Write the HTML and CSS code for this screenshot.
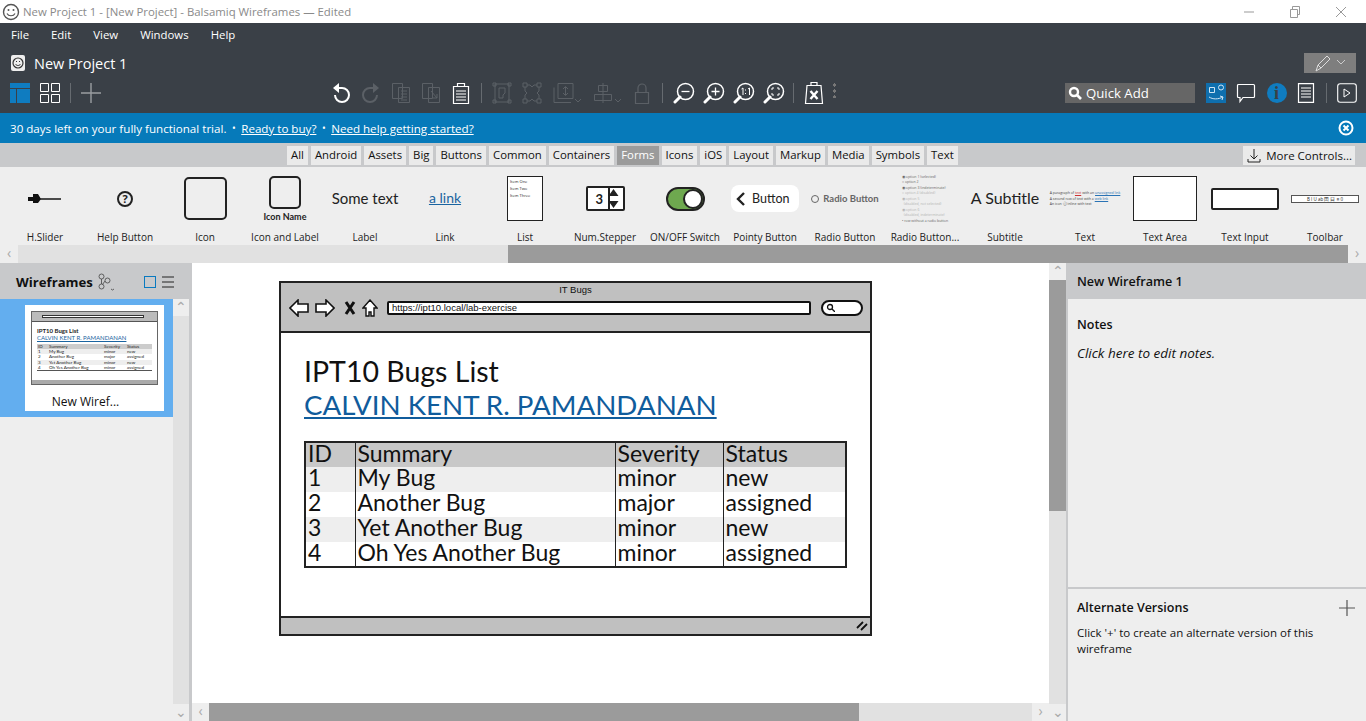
FILE: index.html
```html
<!DOCTYPE html>
<html lang="en">

<head>
    <meta charset="UTF-8">
    <meta name="viewport" content="width=device-width, initial-scale=1.0">
    <title>New Project 1 - Balsamiq Wireframes</title>
    <link rel="stylesheet" href="styles.css">
</head>

<body>
    <svg class="defs" width="0" height="0">
        <symbol id="lens" viewBox="0 0 22 22">
            <circle cx="12.5" cy="9.5" r="8" fill="none" stroke="currentColor" stroke-width="1.5" />
            <path d="M7 15l-5 5" fill="none" stroke="currentColor" stroke-width="3" stroke-linecap="round" />
        </symbol>
    </svg>

    <header class="titlebar">
        <svg class="title-logo" width="18" height="18" viewBox="0 0 18 18">
            <circle cx="9" cy="9" r="7.5" fill="#fff" stroke="#555" stroke-width="1.4" />
            <circle cx="6.5" cy="7" r="1" fill="#555" />
            <circle cx="11.5" cy="7" r="1" fill="#555" />
            <path d="M5 10.5c1.5 3 6.500 3 8 0" fill="none" stroke="#555" stroke-width="1.2" />
        </svg>
        <span class="title-text">New Project 1 - [New Project] - Balsamiq Wireframes — Edited</span>
        <div class="window-btns">
            <svg width="12" height="12" viewBox="0 0 12 12"><path d="M1 6h10" stroke="#999" stroke-width="1" /></svg>
            <svg width="12" height="12" viewBox="0 0 12 12"><path d="M1.500 3.500h7v8h-7zM3.500 3.500v-3h7v8h-2" fill="none" stroke="#999" /></svg>
            <svg width="12" height="12" viewBox="0 0 12 12"><path d="M1 1l10 10M11 1L1 11" stroke="#999" /></svg>
        </div>
    </header>

    <nav class="menubar">
        <span>File</span><span>Edit</span><span>View</span><span>Windows</span><span>Help</span>
    </nav>

    <div class="projectbar">
        <svg width="16" height="18" viewBox="0 0 16 18">
            <rect x="1" y="1" width="14" height="16" rx="2" fill="#eee" />
            <circle cx="8" cy="9" r="5" fill="none" stroke="#333" stroke-width="1.2" />
            <path d="M5.500 10c1 2 4 2 5 0M6 7.500h1M9 7.500h1" fill="none" stroke="#333" />
        </svg>
        <span class="project-name">New Project 1</span>
        <div class="edit-mode">
            <svg width="32" height="20" viewBox="0 0 32 20">
                <path d="M2 18l2-6L13 3l3 3-9 9zM4 12l3 3" fill="none" stroke="#ddd" />
                <path d="M23 7l4 4 4-4" fill="none" stroke="#ccc" />
            </svg>
        </div>
    </div>

    <div class="toolbar">
        <div class="tool-group group-left">
            <svg width="20" height="20" viewBox="0 0 20 20"><path fill="#0f7cc0" d="M0 0h20v5H0zM0 6h6v14H0zM7 6h13v14H7z" /></svg>
            <svg class="gap-10" width="20" height="20" viewBox="0 0 20 20"><path fill="none" stroke="#fff" d="M.5.500h8v8h-8zM11.500.500h8v8h-8zM.5 11.500h8v8h-8zM11.500 11.500h8v8h-8z" /></svg>
            <span class="tool-sep"></span>
            <svg width="20" height="20" viewBox="0 0 20 20"><path d="M10 0v20M0 10h20" stroke="#9a9da1" stroke-width="1.400" /></svg>
        </div>
        <div class="tool-group group-center">
            <svg width="20" height="22" viewBox="0 0 20 22"><path d="M6 6h5a7 7 0 1 1-7 7" fill="none" stroke="#fff" stroke-width="2" /><path d="M8 1v10L2 6z" fill="#fff" /></svg>
            <svg class="off" width="20" height="22" viewBox="0 0 20 22"><path d="M14 6H9a7 7 0 1 0 7 7" fill="none" stroke="currentColor" stroke-width="2" /><path d="M12 1v10l6-5z" fill="currentColor" /></svg>
            <svg class="off" width="20" height="22" viewBox="0 0 20 22"><path d="M1.500 1.500h10v15h-10zM7.500 5.500h11v15h-11zM10 9h6M10 12h6M10 15h6M10 18h6" fill="none" stroke="currentColor" /></svg>
            <svg class="off" width="20" height="22" viewBox="0 0 20 22"><path d="M1.500 1.500h10v15h-10zM7.500 5.500h11v15h-11zM10 9l6 7M16 12v4h-4" fill="none" stroke="currentColor" /></svg>
            <svg width="20" height="22" viewBox="0 0 20 22"><path d="M2.500 4.500h15v17h-15zM6.500 4.500v-3h7v3M5 9h10M5 12h10M5 15h10M5 18h10" fill="none" stroke="#fff" stroke-width="1.200" /></svg>
            <span class="tool-sep"></span>
            <svg class="off" width="20" height="22" viewBox="0 0 20 22"><path d="M3 2h14v18H3zM1 1h3v3H1zM16 1h3v3h-3zM1 18h3v3H1zM16 18h3v3h-3zM7 6h6v5l-2 2v3H7z" fill="none" stroke="currentColor" /></svg>
            <svg class="off" width="20" height="22" viewBox="0 0 20 22"><path d="M1 1h4v4H1zM15 1h4v4h-4zM1 17h4v4H1zM15 17h4v4h-4zM5 3h3l2 2 2-2h3M3 5v4l2 2-2 2v4M17 5v4l-2 2 2 2v4M5 19h3l2-2 2 2h3" fill="none" stroke="currentColor" /></svg>
            <svg class="off wide" width="30" height="22" viewBox="0 0 30 22"><path d="M6 1.500h15v15H6M6 1.500v15M2 5.500v15h17M13.500 5v8M11 7l2.500-2.500L16 7M11 11l2.500 2.500L16 11M23 17l3 3 3-3" fill="none" stroke="currentColor" /></svg>
            <svg class="off wide" width="30" height="22" viewBox="0 0 30 22"><path d="M11 1v20M6.500 3.500h9v6h-9zM2.500 12.500h17v6h-17zM23 17l3 3 3-3" fill="none" stroke="currentColor" /></svg>
            <svg class="off" width="20" height="22" viewBox="0 0 20 22"><path d="M3.500 10.500h13v11h-13zM6 10V6a4 4 0 0 1 8 0v4" fill="none" stroke="currentColor" stroke-width="1.200" /></svg>
            <span class="tool-sep"></span>
            <svg class="zoom-ico" width="22" height="22"><use href="#lens" /><path d="M8.500 9.500h8" stroke="#fff" stroke-width="1.300" /></svg>
            <svg class="zoom-ico" width="22" height="22"><use href="#lens" /><path d="M8.500 9.500h8M12.500 5.500v8" stroke="#fff" stroke-width="1.300" /></svg>
            <svg class="zoom-ico" width="22" height="22"><use href="#lens" /><path d="M8.500 7l1.500-1v7M15 7l1.500-1v7M12.500 7.500v1M12.500 11v1" stroke="#fff" fill="none" /></svg>
            <svg class="zoom-ico" width="22" height="22"><use href="#lens" /><path d="M9 8V6h2M14 6h2v2M16 11v2h-2M11 13H9v-2" stroke="#fff" fill="none" /></svg>
            <span class="tool-sep"></span>
            <svg width="20" height="24" viewBox="0 0 20 24"><path d="M3 4.500h14l1.500 18h-17zM7 4.500v-3h6v3" fill="none" stroke="#fff" stroke-width="1.200" /><path d="M6.500 10l7 8M13.500 10l-7 8" stroke="#fff" stroke-width="2.400" /></svg>
            <span class="tool-dots"></span>
        </div>
        <div class="tool-group group-right">
            <div class="quick-add">
                <svg width="14" height="14" viewBox="0 0 14 14"><circle cx="6" cy="6" r="4" fill="none" stroke="#fff" stroke-width="2.400" /><path d="M9 9l4 4" stroke="#fff" stroke-width="2.600" /></svg>
                <span>Quick Add</span>
            </div>
            <svg width="20" height="20" viewBox="0 0 20 20"><path fill="#0f6fae" d="M0 0h20v20H0z" /><path d="M3.500 4.500h5v5h-5zM15 7a2.500 2.500 0 1 0 0-5 2.500 2.500 0 0 0 0 5zM3 14c4 2.500 9 2.500 14 0M14 13l3 1-1 3" fill="none" stroke="#cfe4f3" /></svg>
            <svg width="20" height="22" viewBox="0 0 20 22"><path d="M2.500 2.500h15a1 1 0 0 1 1 1v11a1 1 0 0 1-1 1H7l-3 4v-4H2.500a1 1 0 0 1-1-1v-11a1 1 0 0 1 1-1z" fill="none" stroke="#fff" stroke-width="1.200" /></svg>
            <div class="info-btn">i</div>
            <svg width="18" height="20" viewBox="0 0 18 20"><path d="M1.500.700h15v18.600h-15zM4 5h10M4 8h10M4 11h10M4 14h10" fill="none" stroke="#fff" stroke-width="1.200" /></svg>
            <span class="tool-sep"></span>
            <svg width="20" height="20" viewBox="0 0 20 20"><rect x=".7" y=".7" width="18.600" height="18.600" rx="2.500" fill="none" stroke="#fff" stroke-width="1.100" /><path d="M7 6l6 4-6 4z" fill="none" stroke="#fff" /></svg>
        </div>
    </div>

    <div class="banner">
        <span>30 days left on your fully functional trial.</span>
        <span class="dot">•</span>
        <a href="#">Ready to buy?</a>
        <span class="dot">•</span>
        <a href="#">Need help getting started?</a>
        <svg class="banner-close" width="16" height="16" viewBox="0 0 16 16">
            <circle cx="8" cy="8" r="6.500" fill="none" stroke="#fff" stroke-width="2" />
            <path d="M5.500 5.500l5 5M10.500 5.500l-5 5" stroke="#fff" stroke-width="2" />
        </svg>
    </div>

    <div class="tabs">
        <span class="tab">All</span>
        <span class="tab">Android</span>
        <span class="tab">Assets</span>
        <span class="tab">Big</span>
        <span class="tab">Buttons</span>
        <span class="tab">Common</span>
        <span class="tab">Containers</span>
        <span class="tab tab-on">Forms</span>
        <span class="tab">Icons</span>
        <span class="tab">iOS</span>
        <span class="tab">Layout</span>
        <span class="tab">Markup</span>
        <span class="tab">Media</span>
        <span class="tab">Symbols</span>
        <span class="tab">Text</span>
        <span class="tab more-controls">
            <svg width="14" height="14" viewBox="0 0 14 14"><path d="M7 0v10M3.500 6.500L7 10l3.500-3.500M1 10v3h12v-3" fill="none" stroke="#222" /></svg>
            More Controls...
        </span>
    </div>

    <div class="library">
        <div class="lib-item">
            <div class="lib-preview"><svg width="34" height="12" viewBox="0 0 34 12"><path d="M0 4h5V1h5l3 5-3 4H5V8H0z" fill="#111" /><path d="M12 6h21" stroke="#222" stroke-width="1.600" /></svg></div>
            <span>H.Slider</span>
        </div>
        <div class="lib-item">
            <div class="lib-preview"><div class="help-btn">?</div></div>
            <span>Help Button</span>
        </div>
        <div class="lib-item">
            <div class="lib-preview"><div class="icon-box"></div></div>
            <span>Icon</span>
        </div>
        <div class="lib-item">
            <div class="lib-preview icon-label"><div class="icon-box small"></div><em>Icon Name</em></div>
            <span>Icon and Label</span>
        </div>
        <div class="lib-item">
            <div class="lib-preview"><b class="some-text">Some text</b></div>
            <span>Label</span>
        </div>
        <div class="lib-item">
            <div class="lib-preview"><a href="#" class="lib-link">a link</a></div>
            <span>Link</span>
        </div>
        <div class="lib-item">
            <div class="lib-preview">
                <div class="list-box"><span>Item One</span><span>Item Two</span><span>Item Three</span></div>
            </div>
            <span>List</span>
        </div>
        <div class="lib-item">
            <div class="lib-preview">
                <div class="stepper"><b>3</b><svg width="13" height="21" viewBox="0 0 13 21"><path d="M6.500 1l5 7h-10zM6.500 20l5-7h-10z" fill="#222" /></svg></div>
            </div>
            <span>Num.Stepper</span>
        </div>
        <div class="lib-item">
            <div class="lib-preview"><div class="switch"><i></i></div></div>
            <span>ON/OFF Switch</span>
        </div>
        <div class="lib-item">
            <div class="lib-preview">
                <div class="pointy"><svg width="10" height="14" viewBox="0 0 10 14"><path d="M8 1L2 7l6 6" fill="none" stroke="#222" stroke-width="2.400" /></svg><b>Button</b></div>
            </div>
            <span>Pointy Button</span>
        </div>
        <div class="lib-item">
            <div class="lib-preview"><div class="radio"><i></i>Radio Button</div></div>
            <span>Radio Button</span>
        </div>
        <div class="lib-item">
            <div class="lib-preview">
                <div class="radio-group">
                    <span>◉ option 1 (selected)</span>
                    <span>○ option 2</span>
                    <span>◉ option 3 (indeterminate)</span>
                    <span class="dim">○ option 4 (disabled)</span>
                    <span class="dim">◉ option 5</span>
                    <span class="dim">&nbsp;&nbsp;(disabled, not selected)</span>
                    <span class="dim">◉ option 6</span>
                    <span class="dim">&nbsp;&nbsp;(disabled, indeterminate)</span>
                    <span>• row without a radio button</span>
                </div>
            </div>
            <span>Radio Button...</span>
        </div>
        <div class="lib-item">
            <div class="lib-preview"><b class="subtitle">A Subtitle</b></div>
            <span>Subtitle</span>
        </div>
        <div class="lib-item">
            <div class="lib-preview">
                <div class="mini-para">
                    <span>A paragraph of <u class="red">text</u> with an <u class="blue">unassigned link</u></span>
                    <span>A second row of text with a <u class="blue">web link</u></span>
                    <span>An icon ⓘ inline with text</span>
                </div>
            </div>
            <span>Text</span>
        </div>
        <div class="lib-item">
            <div class="lib-preview"><div class="text-area"></div></div>
            <span>Text Area</span>
        </div>
        <div class="lib-item">
            <div class="lib-preview"><div class="text-input"></div></div>
            <span>Text Input</span>
        </div>
        <div class="lib-item">
            <div class="lib-preview"><div class="mini-toolbar">B I U ab 田 日 ≡ 0</div></div>
            <span>Toolbar</span>
        </div>
    </div>

    <div class="hscroll lib-scroll">
        <span class="arrow">‹</span>
        <div class="track"><div class="thumb"></div></div>
        <span class="arrow">›</span>
    </div>

    <main class="workspace">
        <aside class="pages">
            <div class="pages-head">
                <b>Wireframes</b>
                <svg class="branch" width="18" height="18" viewBox="0 0 18 18"><path d="M4.500 6a2.500 2.500 0 1 0 0-5 2.500 2.500 0 0 0 0 5zM4.500 16a2.500 2.500 0 1 0 0-5 2.500 2.500 0 0 0 0 5zM10.500 10a2.500 2.500 0 1 0 0-5 2.500 2.500 0 0 0 0 5zM4.500 6v5M8 8l-2.500 3.500M14 16l1.500 1 1.500-1" fill="none" stroke="#444" stroke-width=".8" /></svg>
                <span class="view-square"></span>
                <svg width="12" height="12" viewBox="0 0 12 12"><path d="M0 1h12M0 6h12M0 11h12" stroke="#222" /></svg>
            </div>
            <div class="pages-body">
                <div class="pages-list">
                    <div class="page-on">
                        <div class="page-card">
                            <div class="mini-browser">
                                <div class="mini-top"><div class="mini-url"></div></div>
                                <div class="mini-content">
                                    <div class="mini-h">IPT10 Bugs List</div>
                                    <div class="mini-a">CALVIN KENT R. PAMANDANAN</div>
                                    <table class="mini-table">
                                        <tr class="hd"><td class="m-id">ID</td><td class="m-sum">Summary</td><td class="m-sev">Severity</td><td>Status</td></tr>
                                        <tr class="st"><td>1</td><td>My Bug</td><td>minor</td><td>new</td></tr>
                                        <tr><td>2</td><td>Another Bug</td><td>major</td><td>assigned</td></tr>
                                        <tr class="st"><td>3</td><td>Yet Another Bug</td><td>minor</td><td>new</td></tr>
                                        <tr><td>4</td><td>Oh Yes Another Bug</td><td>minor</td><td>assigned</td></tr>
                                    </table>
                                </div>
                                <div class="mini-bottom"></div>
                            </div>
                            <div class="page-name">New Wiref...</div>
                        </div>
                    </div>
                </div>
                <div class="vscroll list-scroll">
                    <span class="arrow">⌃</span>
                    <div class="track"></div>
                    <span class="arrow">⌄</span>
                </div>
            </div>
        </aside>

        <section class="canvas-wrap">
            <div class="canvas">
                <div class="browser">
                    <div class="browser-top">
                        <div class="browser-title">IT Bugs</div>
                        <div class="browser-nav">
                            <svg width="20" height="18" viewBox="0 0 20 18"><path d="M9 1L1 9l8 8v-4h10V5H9z" fill="#fff" stroke="#111" stroke-width="1.600" /></svg>
                            <svg width="20" height="18" viewBox="0 0 20 18"><path d="M11 1l8 8-8 8v-4H1V5h10z" fill="#fff" stroke="#111" stroke-width="1.600" /></svg>
                            <svg class="nav-stop" width="12" height="14" viewBox="0 0 12 14"><path d="M2 1l8 12M10 1L2 13" stroke="#111" stroke-width="3" /></svg>
                            <svg width="16" height="18" viewBox="0 0 16 18"><path d="M8 1l7 8h-3v8H9v-4H7v4H4V9H1z" fill="#fff" stroke="#111" stroke-width="1.400" /></svg>
                            <div class="url-box">https://ipt10.local/lab-exercise</div>
                            <div class="search-box">
                                <svg width="9" height="9" viewBox="0 0 9 9"><circle cx="4" cy="4" r="2.500" fill="none" stroke="#111" stroke-width="1.300" /><path d="M6 6l3 3" stroke="#111" stroke-width="1.300" /></svg>
                            </div>
                        </div>
                    </div>
                    <div class="browser-body">
                        <div class="page-title">IPT10 Bugs List</div>
                        <a href="#" class="page-link">CALVIN KENT R. PAMANDANAN</a>
                        <table class="bugs">
                            <thead>
                                <tr><th class="col-id">ID</th><th class="col-sum">Summary</th><th class="col-sev">Severity</th><th>Status</th></tr>
                            </thead>
                            <tbody>
                                <tr><td>1</td><td>My Bug</td><td>minor</td><td>new</td></tr>
                                <tr><td>2</td><td>Another Bug</td><td>major</td><td>assigned</td></tr>
                                <tr><td>3</td><td>Yet Another Bug</td><td>minor</td><td>new</td></tr>
                                <tr><td>4</td><td>Oh Yes Another Bug</td><td>minor</td><td>assigned</td></tr>
                            </tbody>
                        </table>
                    </div>
                    <div class="browser-bottom">
                        <svg width="12" height="10" viewBox="0 0 12 10"><path d="M1 7l6-6M5 9l6-6" stroke="#111" stroke-width="1.800" /></svg>
                    </div>
                </div>
            </div>
            <div class="vscroll canvas-scroll">
                <span class="arrow">⌃</span>
                <div class="track"><div class="thumb"></div></div>
                <span class="arrow">⌄</span>
            </div>
            <div class="hscroll canvas-hscroll">
                <span class="arrow">‹</span>
                <div class="track"><div class="thumb"></div></div>
                <span class="arrow">›</span>
            </div>
        </section>

        <aside class="inspector">
            <div class="inspector-head">New Wireframe 1</div>
            <div class="notes">
                <b>Notes</b>
                <em>Click here to edit notes.</em>
            </div>
            <div class="versions">
                <div class="versions-head">
                    <b>Alternate Versions</b>
                    <svg width="16" height="16" viewBox="0 0 16 16"><path d="M8 0v16M0 8h16" stroke="#555" stroke-width="1.200" /></svg>
                </div>
                <p>Click '+' to create an alternate version of this wireframe</p>
            </div>
        </aside>
    </main>
</body>

</html>
```

FILE: styles.css
```css
* {
    box-sizing: border-box;
}

html,
body {
    height: 100%;
}

body {
    margin: 0;
    height: 721px;
    overflow: hidden;
    display: flex;
    flex-direction: column;
    font-family: "Open Sans", "Noto Sans", sans-serif;
    font-size: 12px;
    color: #111;
    background-color: #eee;
}

.defs {
    position: absolute;
}

/* window title */
.titlebar {
    height: 23px;
    flex: none;
    display: flex;
    align-items: center;
    padding-left: 2px;
    background-color: #fff;
    color: #8a8a8a;
}

.title-text {
    margin-left: 3px;
    font-size: 11.4px;
}

.window-btns {
    margin-left: auto;
    display: flex;
    gap: 34px;
    padding-right: 19px;
}

/* dark bars */
.menubar {
    height: 23px;
    flex: none;
    display: flex;
    align-items: center;
    gap: 22px;
    padding-left: 11px;
    background-color: #3a4047;
    color: #fff;
    font-size: 11.4px;
}

.projectbar {
    height: 34px;
    flex: none;
    display: flex;
    align-items: center;
    padding: 0 10px 0 10px;
    background-color: #3a4047;
    color: #fff;
}

.project-name {
    margin-left: 8px;
    font-size: 14.5px;
}

.edit-mode {
    margin-left: auto;
    width: 52px;
    height: 20px;
    padding-left: 10px;
    background-color: #7e7e7e;
}

.toolbar {
    height: 33px;
    flex: none;
    display: flex;
    align-items: flex-start;
    padding-top: 2px;
    background-color: #3a4047;
}

.tool-group {
    display: flex;
    align-items: center;
    height: 22px;
}

.group-left {
    padding-left: 10px;
}

.gap-10 {
    margin-left: 10px;
}

.group-center {
    margin-left: 230px;
    gap: 10px;
}

.zoom-ico {
    margin-right: -2px;
}

.group-right {
    margin-left: auto;
    padding-right: 9px;
    gap: 10.5px;
}

.tool-sep {
    width: 1px;
    height: 20px;
    margin: 0 10px;
    background-color: #666b70;
}

.group-center .tool-sep {
    margin: 0;
}

.group-right .tool-sep {
    margin: 0;
}

.off {
    color: #5b6066;
}

.toolbar svg {
    color: #fff;
    flex: none;
}

.toolbar svg.off {
    color: #5b6066;
}

.tool-dots {
    width: 3px;
    height: 16px;
    margin: 0 0 6px -1px;
    background-image: radial-gradient(circle, #777 1.500px, transparent 1.600px);
    background-size: 3px 6px;
}

.quick-add {
    width: 130px;
    height: 20px;
    display: flex;
    align-items: center;
    gap: 4px;
    padding-left: 3px;
    background-color: #666;
    color: #fff;
    font-size: 13.2px;
}

.info-btn {
    width: 20px;
    height: 20px;
    border-radius: 50%;
    background-color: #0f7cc0;
    color: #3a4047;
    text-align: center;
    font-family: "Liberation Serif", serif;
    font-size: 18px;
    font-weight: bold;
    line-height: 20px;
}

/* trial banner */
.banner {
    height: 30px;
    flex: none;
    display: flex;
    align-items: center;
    gap: 5.5px;
    padding: 0 12px 0 10px;
    background-color: #067aba;
    color: #fff;
    font-size: 11.6px;
}

.banner a {
    color: #fff;
}

.dot {
    font-size: 10px;
}

.banner-close {
    margin-left: auto;
}

/* category tabs */
.tabs {
    height: 24px;
    flex: none;
    display: flex;
    align-items: center;
    gap: 3px;
    padding: 1px 11px 0 287px;
    background-color: #c8c9cb;
}

.tab {
    height: 19px;
    padding: 0 4px;
    background-color: #eaeaea;
    font-size: 11.35px;
    line-height: 18px;
}

.tab-on {
    background-color: #9b9b9b;
    color: #fff;
}

.more-controls {
    margin-left: auto;
    display: flex;
    align-items: center;
    gap: 5px;
    padding: 0 3px 0 4px;
    font-size: 11.5px;
}

/* control library */
.library {
    height: 78px;
    flex: none;
    display: flex;
    padding-left: 5px;
    background-color: #eee;
}

.lib-item {
    width: 80px;
    flex: none;
    display: flex;
    flex-direction: column;
    align-items: center;
    font-size: 10px;
    color: #222;
}

.lib-item > span {
    line-height: 14px;
    white-space: nowrap;
}

.lib-preview {
    height: 63px;
    width: 100%;
    display: flex;
    align-items: center;
    justify-content: center;
}

.help-btn {
    width: 16px;
    height: 16px;
    border: 2px solid #222;
    border-radius: 50%;
    text-align: center;
    font-size: 11px;
    font-weight: bold;
    line-height: 12px;
}

.icon-box {
    width: 43px;
    height: 43px;
    border: 2px solid #222;
    border-radius: 5px;
}

.icon-box.small {
    width: 32px;
    height: 33px;
}

.icon-label {
    flex-direction: column;
    gap: 2px;
    font-family: "Lato", sans-serif;
}

.icon-label em {
    font-style: normal;
    font-size: 9px;
    font-weight: bold;
    line-height: 11px;
}

.some-text {
    margin-top: -2px;
    font-family: "Lato", sans-serif;
    font-size: 15px;
    font-weight: normal;
}

.lib-link {
    margin-top: -2px;
    font-family: "Lato", sans-serif;
    font-size: 14px;
    color: #1a64a0;
}

.list-box {
    width: 36px;
    height: 45px;
    display: flex;
    flex-direction: column;
    gap: 2px;
    padding: 2px;
    border: 1px solid #222;
    background-color: #fff;
    font-size: 4px;
    line-height: 5px;
    white-space: nowrap;
}

.stepper {
    width: 39px;
    height: 25px;
    display: flex;
    align-items: center;
    justify-content: space-between;
    padding: 0 3px 0 8px;
    border: 2px solid #222;
    border-radius: 2px;
    background-color: #fff;
    background-image: linear-gradient(#222, #222);
    background-size: 2px 100%;
    background-position: 20px 0;
    background-repeat: no-repeat;
    font-family: "Lato", sans-serif;
    font-size: 13px;
}

.switch {
    width: 39px;
    height: 24px;
    padding-left: 15px;
    border: 2px solid #222;
    border-radius: 12px;
    background-color: #6ea84f;
}

.switch i {
    display: block;
    width: 20px;
    height: 20px;
    border: 2px solid #222;
    border-radius: 50%;
    background-color: #fff;
}

.pointy {
    width: 68px;
    height: 27px;
    display: flex;
    align-items: center;
    gap: 6px;
    padding-left: 5px;
    border-radius: 8px;
    background-color: #fff;
    font-family: "Lato", sans-serif;
    font-size: 12.500px;
}

.pointy b {
    font-weight: normal;
}

.radio {
    display: flex;
    align-items: center;
    gap: 4px;
    font-family: "Lato", sans-serif;
    font-size: 9.500px;
    font-weight: bold;
    color: #666;
    white-space: nowrap;
}

.radio i {
    width: 8px;
    height: 8px;
    border: 1px solid #666;
    border-radius: 50%;
}

.radio-group {
    display: flex;
    flex-direction: column;
    font-size: 3.500px;
    line-height: 5.500px;
    color: #666;
    white-space: nowrap;
}

.radio-group .dim {
    color: #b5b5b5;
}

.subtitle {
    margin-top: -2px;
    font-family: "Lato", sans-serif;
    font-size: 16px;
    font-weight: normal;
    white-space: nowrap;
}

.mini-para {
    display: flex;
    flex-direction: column;
    font-size: 3.500px;
    line-height: 5.500px;
    white-space: nowrap;
    color: #444;
}

.red {
    color: #c33;
}

.blue {
    color: #2a73b5;
}

.text-area {
    width: 64px;
    height: 45px;
    border: 1px solid #222;
    background-color: #fff;
}

.text-input {
    width: 68px;
    height: 22px;
    border: 2px solid #222;
    border-radius: 2px;
    background-color: #fff;
}

.mini-toolbar {
    width: 68px;
    height: 8px;
    border: 1px solid #555;
    background-color: #fff;
    font-size: 4.500px;
    line-height: 6px;
    text-align: center;
    white-space: nowrap;
}

/* scrollbars */
.hscroll {
    display: flex;
    height: 18px;
    flex: none;
}

.vscroll {
    display: flex;
    flex-direction: column;
    width: 17px;
    flex: none;
}

.track {
    flex: 1;
    display: flex;
    background-color: #e1e1e1;
}

.thumb {
    background-color: #9b9b9b;
}

.arrow {
    flex: none;
    width: 18px;
    height: 18px;
    color: #aaa;
    background-color: #eee;
    text-align: center;
    font-size: 14px;
    line-height: 16px;
}

.vscroll .arrow {
    width: 100%;
    height: 17px;
}

.lib-scroll .track {
    justify-content: flex-end;
}

.lib-scroll .thumb {
    width: 840px;
}

/* main area */
.workspace {
    flex: 1;
    min-height: 0;
    display: grid;
    grid-template-columns: 192px 1fr 300px;
}

.pages {
    display: flex;
    flex-direction: column;
    border-right: 3px solid #c8c9cb;
    min-height: 0;
}

.pages-head {
    height: 36px;
    flex: none;
    display: flex;
    align-items: center;
    padding: 2px 0 0 16px;
    background-color: #c8c9cb;
    font-size: 13.200px;
}

.branch {
    margin-left: 4px;
}

.view-square {
    width: 12px;
    height: 12px;
    flex: none;
    margin: 0 6px 0 29px;
    border: 1px solid #0a7ac0;
}

.pages-body {
    flex: 1;
    min-height: 0;
    display: flex;
}

.pages-list {
    flex: 1;
    background-color: #eee;
}

.list-scroll {
    width: 16px;
}

.page-on {
    height: 118px;
    padding: 6px 9px 6px 25px;
    background-color: #63aeef;
}

.page-card {
    height: 106px;
    padding: 6px 6px 0;
    background-color: #fff;
}

.mini-browser {
    height: 74px;
    display: flex;
    flex-direction: column;
    border: 1px solid #666;
    font-family: "Lato", sans-serif;
    color: #222;
}

.mini-top {
    height: 10px;
    flex: none;
    padding: 3px 2px 0 10px;
    background-color: #bbb;
    border-bottom: 1px solid #555;
}

.mini-url {
    height: 3px;
    margin-right: 11px;
    border: 1px solid #333;
    background-color: #fff;
}

.mini-content {
    flex: 1;
    padding: 5px 5px 0;
}

.mini-bottom {
    height: 4px;
    flex: none;
    background-color: #aaa;
}

.mini-h {
    font-size: 6px;
    font-weight: bold;
    line-height: 7px;
}

.mini-a {
    font-size: 6px;
    line-height: 7px;
    color: #1a64a0;
    text-decoration: underline;
    white-space: nowrap;
}

.mini-table {
    width: 115px;
    margin-top: 3px;
    border-collapse: collapse;
    border-bottom: 1px solid #555;
    font-size: 4.500px;
    line-height: 5.200px;
}

.mini-table td {
    padding: 0 0 0 1px;
}

.m-id {
    width: 11px;
}

.m-sum {
    width: 55px;
}

.m-sev {
    width: 23px;
}

.hd {
    background-color: #ccc;
}

.st {
    background-color: #eee;
}

.page-name {
    margin-top: 8px;
    padding-right: 18px;
    text-align: center;
    font-size: 12px;
}

/* canvas */
.canvas-wrap {
    min-height: 0;
    display: grid;
    grid-template-columns: 1fr 17px;
    grid-template-rows: 1fr 18px;
}

.canvas {
    padding: 18px 0 0 87px;
    background-color: #fff;
    overflow: hidden;
}

.canvas-scroll {
    width: 17px;
    grid-row: 1 / 3;
    grid-column: 2;
}

.canvas-scroll .track {
    flex-direction: column;
}

.canvas-scroll .thumb {
    height: 231px;
}

.canvas-hscroll .arrow {
    width: 17px;
}

.canvas-hscroll .thumb {
    width: 650px;
}

.browser {
    width: 593px;
    height: 355px;
    display: flex;
    flex-direction: column;
    border: 2px solid #222;
    font-family: "Lato", sans-serif;
    color: #111;
}

.browser-top {
    height: 50px;
    flex: none;
    padding-top: 1px;
    border-bottom: 2px solid #222;
    background-color: #c0c0c0;
}

.browser-title {
    text-align: center;
    font-family: "Liberation Sans", sans-serif;
    font-size: 9.500px;
    line-height: 11px;
}

.browser-nav {
    display: flex;
    align-items: center;
    gap: 6px;
    padding: 4px 7px 0 8px;
}

.nav-stop {
    margin-left: 3px;
}

.url-box {
    flex: 1;
    height: 14px;
    margin-left: 3px;
    padding-left: 3px;
    border: 2px solid #111;
    border-radius: 2px;
    background-color: #fff;
    font-family: "Liberation Sans", sans-serif;
    font-size: 9.500px;
    line-height: 10px;
}

.search-box {
    width: 42px;
    height: 16px;
    margin-left: 4px;
    padding-left: 3px;
    border: 2px solid #111;
    border-radius: 8px;
    background-color: #fff;
    line-height: 12px;
}

.browser-body {
    flex: 1;
    padding: 21px 23px 0 23px;
    background-color: #fff;
}

.page-title {
    font-size: 28.500px;
    line-height: 35px;
}

.page-link {
    display: block;
    width: fit-content;
    font-size: 27.700px;
    line-height: 32px;
    color: #105c9c;
}

.bugs {
    width: 543px;
    margin-top: 20px;
    border: 2px solid #222;
    border-collapse: collapse;
    font-size: 23px;
}

.bugs th,
.bugs td {
    height: 25px;
    padding: 0 0 0 2px;
    border-left: 1px solid #222;
    font-weight: normal;
    text-align: left;
    line-height: 20px;
    vertical-align: top;
}

.bugs thead tr {
    background-color: #c8c8c8;
}

.bugs tbody tr:nth-child(odd) {
    background-color: #eee;
}

.bugs tbody tr:nth-child(even) {
    background-color: #fff;
}

.col-id {
    width: 50px;
}

.col-sum {
    width: 260px;
}

.col-sev {
    width: 108px;
}

.browser-bottom {
    height: 18px;
    flex: none;
    display: flex;
    align-items: center;
    justify-content: flex-end;
    padding-right: 2px;
    border-top: 2px solid #222;
    background-color: #c0c0c0;
}

/* right panel */
.inspector {
    display: flex;
    flex-direction: column;
    border-left: 2px solid #c8c9cb;
    min-height: 0;
    background-color: #eee;
}

.inspector-head {
    height: 36px;
    flex: none;
    padding: 1px 0 0 9px;
    background-color: #c8c9cb;
    font-size: 12.600px;
    font-weight: 600;
    line-height: 36px;
}

.notes {
    flex: 1;
    display: flex;
    flex-direction: column;
    gap: 11px;
    padding: 17px 9px 0;
}

.notes b {
    font-size: 12.500px;
    font-weight: 600;
}

.notes em {
    font-size: 13.500px;
}

.versions {
    height: 134px;
    flex: none;
    padding: 10px 9px 0;
    border-top: 2px solid #c8c9cb;
}

.versions-head {
    display: flex;
    align-items: center;
    justify-content: space-between;
    padding-right: 2px;
    font-size: 12.500px;
}

.versions-head b {
    font-weight: 600;
}

.versions p {
    margin: 9px 0 0;
    font-size: 11.500px;
    line-height: 16px;
}
```
